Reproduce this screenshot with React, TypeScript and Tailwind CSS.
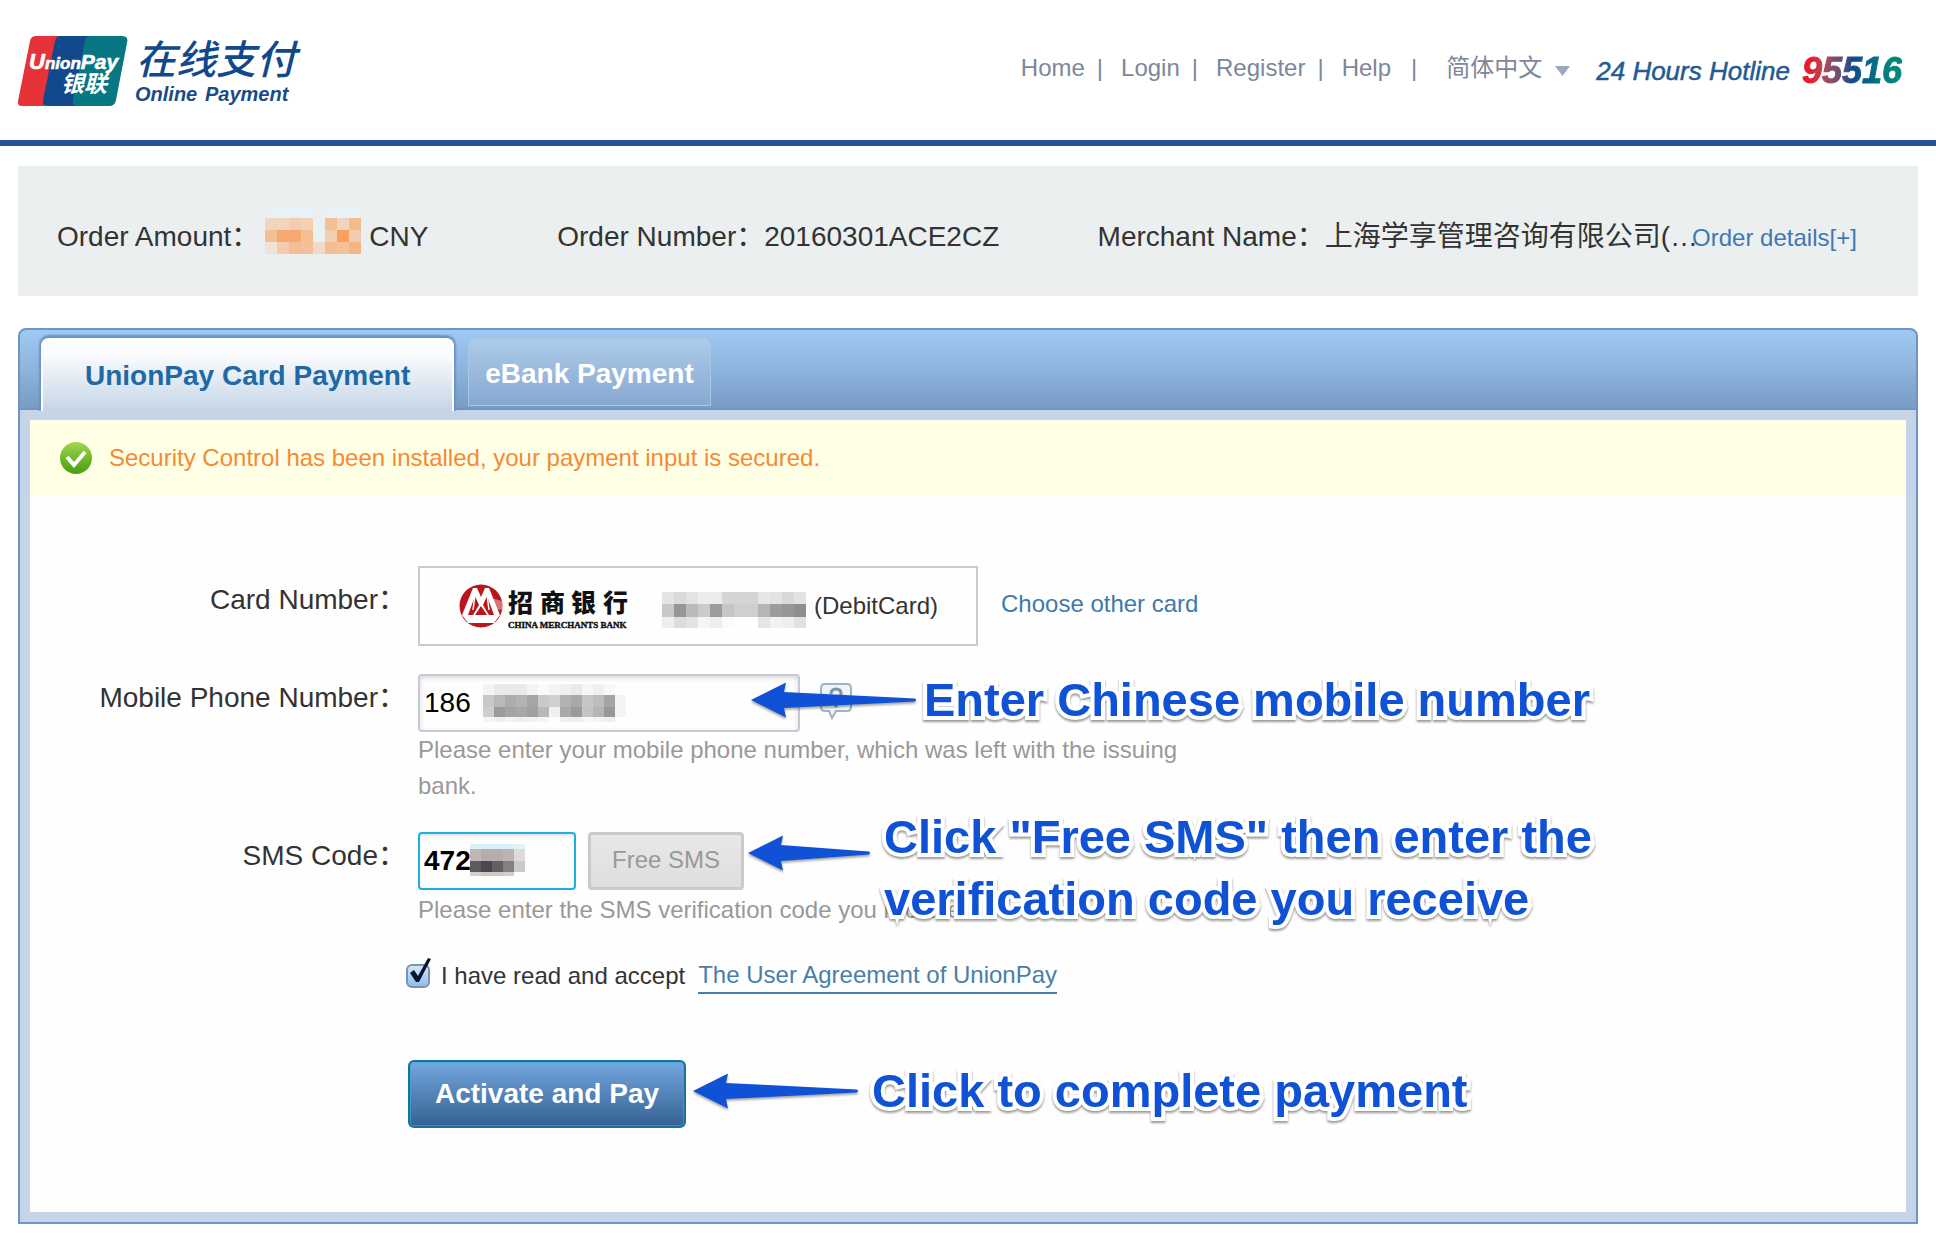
import React from 'react';

interface MosaicProps {
  rows: string[][];
  cell: number;
  heights: number[];
  className?: string;
}

// Pixelated block that hides private digits. An empty string leaves the cell clear.
const Mosaic: React.FC<MosaicProps> = ({ rows, cell, heights, className }) => {
  const width = rows[0].length * cell;
  const height = heights.reduce((a, b) => a + b, 0);
  return (
    <svg
      aria-hidden="true"
      width={width}
      height={height}
      className={className}
      shapeRendering="crispEdges"
    >
      {rows.map((row, r) => {
        const y = heights.slice(0, r).reduce((a, b) => a + b, 0);
        return row.map((fill, c) =>
          fill ? (
            <rect key={`${r}-${c}`} x={c * cell} y={y} width={cell} height={heights[r]} fill={fill} />
          ) : null
        );
      })}
    </svg>
  );
};

const grey = (row: string) => row.split(' ').map((v) => `#${v}${v}${v}`);

const AMOUNT = [
  ['#e8f2f6', '#e8f2f6', '#e8f2f6', '#e9f2f5', '', '#e6f2f8', '#e6f2f8', '#e6f2f8'],
  ['#f0d4bf', '#f3d5bc', '#f4cdb0', '#f3cfb4', '#ebf1f3', '#f4bf95', '#f1d4c0', '#f4bb8c'],
  ['#f6bf93', '#f7a86e', '#f7a871', '#f6be93', '#ebf1f3', '#f1cdb2', '#fb9f5a', '#f1cbb0'],
  ['#eee3d9', '#f3cbb0', '#f4be95', '#f5c099', '#f1d9c8', '#f4be92', '#f4c199', '#f5b583'],
];

const CARD = [
  grey('e4 da e3 ec ec d5 d4 d4 e6 e3 d8 e2'),
  grey('c8 96 ba cb 9b c6 cf cf b5 9c 96 8e'),
  grey('ee dd e3 f5 ee fb ff ff e5 f2 ee e1'),
];

const PHONE = [
  grey('f4 ea ea ea f4 fa f4 ef ea f6 ef f8 fe'),
  grey('c8 b9 ac b3 a5 c9 cf b2 a9 c6 bc a5 f4'),
  grey('cf 9b a4 a8 a0 b8 f0 a9 9b c4 b5 98 f4'),
  grey('f5 ef f4 ef f2 f5 fd ef f0 f7 f4 f0 fe'),
];

const CODE = [
  ['#d9f0f8', '#d9f0f8', '#d9f0f8', '#d9f0f8', '#e2f2f8'],
  ['#c0b6b2', '#b7adaa', '#b7adac', '#bdb3b1', '#dcdcdc'],
  ['#5b5b60', '#48484d', '#606066', '#858080', '#c9cacd'],
  ['#dacdd0', '#cfc5c7', '#cfc5c7', '#d6cccf', ''],
];

const UnionPayLogo = () => (
  <svg width="300" height="90" viewBox="0 -14 300 90" role="img" aria-label="UnionPay Online Payment">
    <path d="M16 3h30L28 73H4q-5 0-4-5L12 8q1-5 6-5z" fill="#e6333a" />
    <path d="M42 3h36L62 73H30q-6 0-5-6L37 8q1-5 5-5z" fill="#12498c" />
    <path d="M72 3h32q7 0 5 7L98 67q-1 6-7 6H59q-5 0-4-6L67 8q1-5 5-5z" fill="#087784" />
    <text
      x="11"
      y="36"
      fill="#fff"
      stroke="#fff"
      strokeWidth="0.600"
      fontFamily="Liberation Sans, sans-serif"
      fontWeight="700"
      fontStyle="italic"
    >
      <tspan fontSize="22">U</tspan>
      <tspan fontSize="17">nion</tspan>
      <tspan fontSize="21">Pay</tspan>
    </text>
    <text x="43" y="59" fill="#fff" fontSize="23" fontWeight="700" fontStyle="italic" fontFamily="Noto Sans CJK SC, sans-serif">
      银联
    </text>
    <text x="118" y="41" fill="#12498c" fontSize="40" fontWeight="500" fontStyle="italic" fontFamily="Noto Sans CJK SC, sans-serif">
      在线支付
    </text>
    <g fill="#1a4b85" fontSize="20" fontWeight="700" fontStyle="italic" fontFamily="Liberation Sans, sans-serif">
      <text x="117" y="68">Online</text>
      <text x="187" y="68">Payment</text>
    </g>
  </svg>
);

const MerchantsBankLogo = () => (
  <svg width="170" height="50" viewBox="0 0 170 50" role="img" aria-label="China Merchants Bank">
    <circle cx="22" cy="25" r="21.500" fill="#b9161c" />
    <path d="M32 17l11 3q1 5 0 9l-8-1z" fill="#fff" opacity="0.400" />
    <path d="M14 7h4l4 9 4-9h4l11 27-6 8H9l-6-8z" fill="#fff" />
    <path d="M16 15l4 9-6 10H9zM28 15l7 19h-5l-6-10zM22 25l6 9H16z" fill="#b9161c" />
    <path d="M16 14l-2 15M28 14l2 15" stroke="#fff" strokeWidth="1.500" />
    <text
      x="49 81 112 144"
      y="31"
      fill="#111"
      fontSize="25"
      fontWeight="900"
      fontFamily="Noto Sans CJK SC, sans-serif"
    >
      招商银行
    </text>
    <text
      x="49"
      y="47"
      fill="#111"
      stroke="#111"
      strokeWidth="0.400"
      fontSize="9"
      fontWeight="700"
      fontFamily="Liberation Serif, serif"
    >
      CHINA MERCHANTS BANK
    </text>
  </svg>
);

const CheckBadge = () => (
  <svg width="32" height="32" viewBox="0 0 32 32" aria-hidden="true">
    <defs>
      <linearGradient id="badge" x1="0" y1="0" x2="0" y2="1">
        <stop offset="0" stopColor="#a5d64f" />
        <stop offset="0.500" stopColor="#6fbb2b" />
        <stop offset="1" stopColor="#4c9d12" />
      </linearGradient>
    </defs>
    <circle cx="16" cy="16" r="16" fill="url(#badge)" />
    <path d="M7 15l7 8L25 10" fill="none" stroke="#fff" strokeWidth="4" />
  </svg>
);

const HelpBubble = () => (
  <svg width="32" height="38" viewBox="0 0 32 38" aria-hidden="true">
    <path
      d="M5 2h22q4 0 4 4v19q0 4-4 4H16l-4 7-3-7H5q-4 0-4-4V6q0-4 4-4z"
      fill="#eef4f8"
      stroke="#9db4c2"
      strokeWidth="2"
    />
    <path
      d="M11 12q0-5 5-5t5 4.500q0 2.500-2.500 4T16 19.500M16 22v3.500"
      fill="none"
      stroke="#7f95a5"
      strokeWidth="3"
    />
  </svg>
);

interface NoteProps {
  children: React.ReactNode;
  length: number;
  className: string;
  arrowClassName?: string;
}

// Tutorial callout drawn over the form: tapered arrow pointing left, then outlined text
const Note: React.FC<NoteProps> = ({ children, length, className, arrowClassName = 'mt-3' }) => (
  <div className={`pointer-events-none absolute z-10 flex items-start whitespace-nowrap ${className}`}>
    <svg
      aria-hidden="true"
      width={length}
      height="38"
      className={`shrink-0 overflow-visible drop-shadow-[0_2px_1px_rgba(0,0,0,0.35)] ${arrowClassName}`}
    >
      <path
        d={`M0 19L35 1.500L33 11L${length - 1} 17.500q2 1.500 0 3L33 27L35 36.500z`}
        fill="#0f52d5"
      />
    </svg>
    <p className="text-[47px]/[62px] font-bold text-[#0f52d5] [-webkit-text-stroke:8px_white] [paint-order:stroke_fill] [stroke-linejoin:round] drop-shadow-[0_2px_1px_rgba(0,0,0,0.4)]">
      {children}
    </p>
  </div>
);

const NAV = ['Home', 'Login', 'Register', 'Help'];

const Header = () => (
  <header className="flex h-[146px] items-start justify-between border-b-6 border-[#27519b] pr-[34px] pl-[18px]">
    <div className="pt-[19px]">
      <UnionPayLogo />
    </div>
    <div className="flex items-start pt-[46px] leading-[40px]">
      <div className="flex items-baseline text-[24px] text-[#7d8798]">
        <nav className="flex">
          {NAV.map((item, i) => (
            <React.Fragment key={item}>
              <a href="#">{item}</a>
              <span className={i === NAV.length - 1 ? 'mr-[29px] ml-5' : 'mr-[18px] ml-3'}>|</span>
            </React.Fragment>
          ))}
        </nav>
        <span className="relative">
          <select
            aria-label="Language"
            className="w-[124px] appearance-none bg-transparent font-['Noto_Sans_CJK_SC',sans-serif]"
          >
            <option>简体中文</option>
          </select>
          <svg
            width="15"
            height="10"
            aria-hidden="true"
            className="pointer-events-none absolute top-5 right-0"
          >
            <path d="M0 0h15L7.500 10z" fill="#99a9c0" />
          </svg>
        </span>
      </div>
      <div className="ml-[26px] flex items-center pt-[5px] italic">
        <p className="text-[26px] text-[#245a93] [-webkit-text-stroke:0.5px_#245a93]">
          24 Hours Hotline
        </p>
        <strong className="ml-3 bg-linear-to-r from-[#e51c2c] from-10% via-[#12498c] via-50% to-[#04867d] to-90% bg-clip-text text-[36px] text-transparent [-webkit-text-stroke:1px_transparent]">
          95516
        </strong>
      </div>
    </div>
  </header>
);

const OrderBar = () => (
  <section className="grid h-[130px] grid-cols-[25fr_27fr_38fr] items-start bg-[#ebeff0] pt-[53px] pr-15 pl-[39px] text-[28px]/[36px] whitespace-nowrap">
    <p className="flex">
      Order Amount：
      <Mosaic rows={AMOUNT} cell={12} heights={[10, 12, 12, 12]} className="-mt-[11px] mr-2 ml-1.5" />
      CNY
    </p>
    <p>Order Number：20160301ACE2CZ</p>
    <p className="flex items-baseline">
      Merchant Name：上海学享管理咨询有限公司(…
      <a href="#" className="-ml-1.5 text-[24px] text-[#4079b1]">
        Order details[+]
      </a>
    </p>
  </section>
);

const Tabs = () => (
  <div
    role="tablist"
    className="flex h-[82px] items-start rounded-t-lg border-2 border-[#6f95c7] bg-linear-to-b from-[#9fc9f1] via-[#8db4dd] to-[#779dc5] pt-2 pl-[21px] font-bold"
  >
    <button
      role="tab"
      aria-selected="true"
      className="z-1 h-[73px] rounded-t-lg border-2 border-b-0 border-white bg-linear-to-b from-[#fbfcfe] from-20% to-[#c5d5e7] px-[42px] text-[28px] text-[#2069a4] shadow-[0_-1px_2px_2px_#6993c4] [clip-path:inset(-4px_-4px_0)]"
    >
      UnionPay Card Payment
    </button>
    <button
      role="tab"
      aria-selected="false"
      className="ml-3.5 h-[68px] rounded-t-lg border border-[#a9c8e8] bg-linear-to-b from-[#aecbea] to-[#86a9d0] px-4 pt-1 text-[28px] text-white"
    >
      eBank Payment
    </button>
  </div>
);

const PaymentForm = () => (
  <form className="grid grid-cols-[376px_1fr] gap-x-3 pt-[70px] pb-[84px]" onSubmit={(e) => e.preventDefault()}>
    <span className="pt-4 text-right text-[28px]/[36px]">Card Number：</span>
    <div className="mb-7 flex items-center">
      <div className="flex h-20 w-[560px] items-center border-2 border-[#c3cbd4] pl-[39px] text-[24px]">
        <MerchantsBankLogo />
        <Mosaic rows={CARD} cell={12} heights={[12, 13, 11]} className="mt-2 mr-2 ml-[33px]" />
        <span>(DebitCard)</span>
      </div>
      <a href="#" className="ml-[23px] pb-1 text-[24px] text-[#4079ac]">
        Choose other card
      </a>
    </div>

    <label htmlFor="phone" className="pt-1.5 text-right text-[28px]/[36px]">
      Mobile Phone Number：
    </label>
    <div className="relative mb-7">
      <div className="flex items-start">
        <div className="relative">
          <input
            id="phone"
            type="text"
            defaultValue="186"
            className="h-[58px] w-[382px] rounded border-2 border-[#c3cbd4] px-1 text-[28px] text-black shadow-[inset_0_2px_5px_rgba(0,0,0,0.15)] outline-none"
          />
          <Mosaic rows={PHONE} cell={11} heights={[11, 12, 10, 5]} className="absolute top-2.5 left-[65px]" />
        </div>
        <button type="button" aria-label="Help" className="mt-2 ml-5">
          <HelpBubble />
        </button>
      </div>
      <p className="max-w-[780px] text-[24px]/[36px] text-[#999]">
        Please enter your mobile phone number, which was left with the issuing bank.
      </p>
      <Note length={165} className="-top-[5px] left-[333px] gap-2">
        Enter Chinese mobile number
      </Note>
    </div>

    <label htmlFor="sms" className="pt-1.5 text-right text-[28px]/[36px]">
      SMS Code：
    </label>
    <div className="relative mb-[30px]">
      <div className="flex gap-3">
        <div className="relative">
          <input
            id="sms"
            type="text"
            defaultValue="472"
            className="h-[58px] w-[158px] rounded border-2 border-[#1cb0dc] px-1 text-[28px] font-bold text-black shadow-[inset_0_2px_3px_rgba(0,0,0,0.1)] outline-none"
          />
          <Mosaic rows={CODE} cell={11} heights={[5, 12, 11, 4]} className="absolute top-3 left-[52px]" />
        </div>
        <button
          type="button"
          className="h-[58px] w-[156px] rounded border-3 border-[#cacaca] bg-linear-to-b from-[#e8e8e8] to-[#dedede] pb-0.5 text-[24px] text-[#999]"
        >
          Free SMS
        </button>
      </div>
      <p className="pt-0.5 text-[24px]/[36px] text-[#999]">
        Please enter the SMS verification code you received
      </p>
      <Note length={122} className="-top-[26px] left-[330px] gap-3.5" arrowClassName="mt-7">
        Click "Free SMS" then enter the
        <br />
        verification code you receive
      </Note>
    </div>

    <div className="col-start-2 -ml-3 flex items-center text-[24px]/[36px]">
      <span className="relative mr-[11px] size-6">
        <input
          id="agree"
          type="checkbox"
          defaultChecked
          className="block size-6 appearance-none rounded-md border-2 border-[#7b93b0] bg-linear-to-b from-[#d4e6f8] to-[#8fbdee]"
        />
        <svg width="28" height="30" aria-hidden="true" className="pointer-events-none absolute -top-2 left-0">
          <path d="M4 17l4-3 4 6L22 2l3 1L13 26h-3z" fill="#08152c" />
        </svg>
      </span>
      <label htmlFor="agree">I have read and accept</label>
      <a href="#" className="ml-[13px] border-b-2 border-[#4a7ea6] leading-[34px] text-[#4a7ea6]">
        The User Agreement of UnionPay
      </a>
    </div>

    <div className="relative col-start-2 mt-[66px] -ml-2.5">
      <button
        type="submit"
        className="h-[68px] w-[278px] rounded-md border-2 border-[#17719d] bg-linear-to-b from-[#74a7e0] to-[#356292] text-[28px] font-bold text-white shadow-[inset_0_0_0_1px_rgba(60,166,214,0.7)]"
      >
        Activate and Pay
      </button>
      <Note length={165} className="top-0 left-[285px] gap-3.5">
        Click to complete payment
      </Note>
    </div>
  </form>
);

export default function App() {
  return (
    <div className="min-h-screen bg-white font-['Liberation_Sans','Noto_Sans_CJK_SC',sans-serif] text-[#333]">
      <Header />
      <main className="px-[18px] pt-5 pb-[22px]">
        <OrderBar />
        <section className="mt-8">
          <Tabs />
          <div className="border-2 border-t-0 border-[#6f95c7] bg-[#c5d5e7] p-2.5">
            <div className="bg-[#fefefe]">
              <p className="flex h-19 items-center gap-[17px] bg-[#ffffe5] pl-[30px] text-[24px] text-[#f58a35]">
                <CheckBadge />
                Security Control has been installed, your payment input is secured.
              </p>
              <PaymentForm />
            </div>
          </div>
        </section>
      </main>
    </div>
  );
}
